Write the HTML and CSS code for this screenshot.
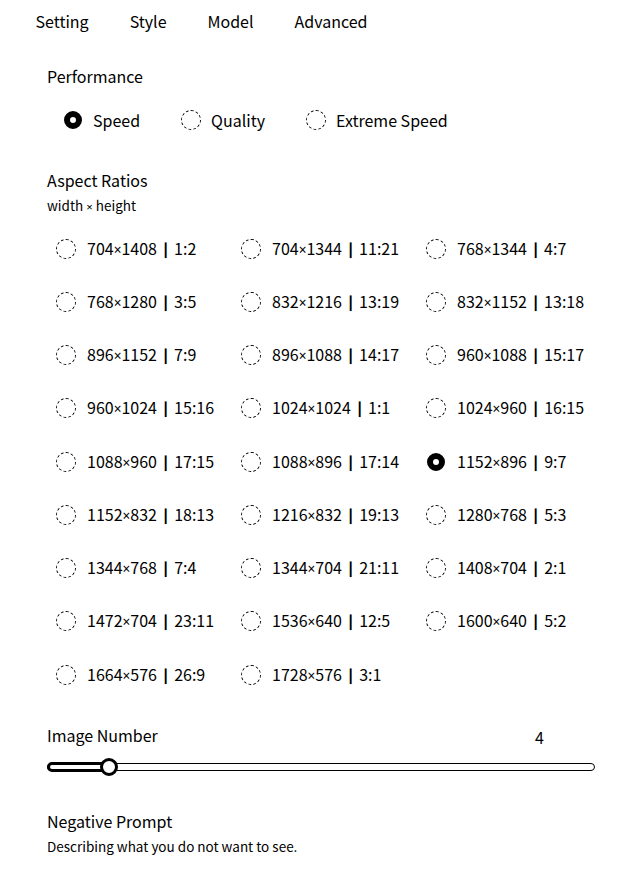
FILE: index.html
```html
<!DOCTYPE html>
<html>
<head>
<meta charset="utf-8">
<link rel="stylesheet" href="styles.css">
</head>
<body>
<nav class="tabs">
  <span class="tab">Setting</span>
  <span class="tab">Style</span>
  <span class="tab">Model</span>
  <span class="tab">Advanced</span>
</nav>
<main class="panel">
  <div class="label perf-label">Performance</div>
  <div class="perf-row">
    <label class="radio"><span class="dot on"></span>Speed</label>
    <label class="radio"><span class="dot"></span>Quality</label>
    <label class="radio"><span class="dot"></span>Extreme Speed</label>
  </div>

  <div class="label aspect-label">Aspect Ratios</div>
  <div class="sub">width <span class="x">×</span> height</div>
  <div class="grid">
    <label class="radio"><span class="dot"></span><span>704<span class="x">×</span>1408 <span class="sep">∣</span> 1:2</span></label>
    <label class="radio"><span class="dot"></span><span>704<span class="x">×</span>1344 <span class="sep">∣</span> 11:21</span></label>
    <label class="radio"><span class="dot"></span><span>768<span class="x">×</span>1344 <span class="sep">∣</span> 4:7</span></label>
    <label class="radio"><span class="dot"></span><span>768<span class="x">×</span>1280 <span class="sep">∣</span> 3:5</span></label>
    <label class="radio"><span class="dot"></span><span>832<span class="x">×</span>1216 <span class="sep">∣</span> 13:19</span></label>
    <label class="radio"><span class="dot"></span><span>832<span class="x">×</span>1152 <span class="sep">∣</span> 13:18</span></label>
    <label class="radio"><span class="dot"></span><span>896<span class="x">×</span>1152 <span class="sep">∣</span> 7:9</span></label>
    <label class="radio"><span class="dot"></span><span>896<span class="x">×</span>1088 <span class="sep">∣</span> 14:17</span></label>
    <label class="radio"><span class="dot"></span><span>960<span class="x">×</span>1088 <span class="sep">∣</span> 15:17</span></label>
    <label class="radio"><span class="dot"></span><span>960<span class="x">×</span>1024 <span class="sep">∣</span> 15:16</span></label>
    <label class="radio"><span class="dot"></span><span>1024<span class="x">×</span>1024 <span class="sep">∣</span> 1:1</span></label>
    <label class="radio"><span class="dot"></span><span>1024<span class="x">×</span>960 <span class="sep">∣</span> 16:15</span></label>
    <label class="radio"><span class="dot"></span><span>1088<span class="x">×</span>960 <span class="sep">∣</span> 17:15</span></label>
    <label class="radio"><span class="dot"></span><span>1088<span class="x">×</span>896 <span class="sep">∣</span> 17:14</span></label>
    <label class="radio"><span class="dot on"></span><span>1152<span class="x">×</span>896 <span class="sep">∣</span> 9:7</span></label>
    <label class="radio"><span class="dot"></span><span>1152<span class="x">×</span>832 <span class="sep">∣</span> 18:13</span></label>
    <label class="radio"><span class="dot"></span><span>1216<span class="x">×</span>832 <span class="sep">∣</span> 19:13</span></label>
    <label class="radio"><span class="dot"></span><span>1280<span class="x">×</span>768 <span class="sep">∣</span> 5:3</span></label>
    <label class="radio"><span class="dot"></span><span>1344<span class="x">×</span>768 <span class="sep">∣</span> 7:4</span></label>
    <label class="radio"><span class="dot"></span><span>1344<span class="x">×</span>704 <span class="sep">∣</span> 21:11</span></label>
    <label class="radio"><span class="dot"></span><span>1408<span class="x">×</span>704 <span class="sep">∣</span> 2:1</span></label>
    <label class="radio"><span class="dot"></span><span>1472<span class="x">×</span>704 <span class="sep">∣</span> 23:11</span></label>
    <label class="radio"><span class="dot"></span><span>1536<span class="x">×</span>640 <span class="sep">∣</span> 12:5</span></label>
    <label class="radio"><span class="dot"></span><span>1600<span class="x">×</span>640 <span class="sep">∣</span> 5:2</span></label>
    <label class="radio"><span class="dot"></span><span>1664<span class="x">×</span>576 <span class="sep">∣</span> 26:9</span></label>
    <label class="radio"><span class="dot"></span><span>1728<span class="x">×</span>576 <span class="sep">∣</span> 3:1</span></label>
  </div>

  <div class="slider-head">
    <span class="label">Image Number</span>
    <span class="num">4</span>
  </div>
  <div class="slider">
    <div class="track"></div>
    <div class="fill"></div>
    <div class="thumb"></div>
  </div>

  <div class="label neg-label">Negative Prompt</div>
  <div class="sub neg-sub">Describing what you do not want to see.</div>
</main>
</body>
</html>
```
FILE: styles.css
```css
* { box-sizing: border-box; }
body {
  margin: 0;
  background: #fff;
  color: #000;
  font-family: "Noto Sans CJK SC", "Noto Sans", sans-serif;
  font-size: 16px;
}
.tabs {
  display: flex;
  align-items: center;
  height: 42px;
  padding-left: 15px;
}
.tab {
  padding: 0 20.5px;
  line-height: 24px;
}
.panel {
  padding-left: 47px;
  width: 596px;
}
.label {
  line-height: 24px;
  font-size: 16px;
}
.perf-label { margin-top: 22px; }
.perf-row {
  display: flex;
  gap: 41px;
  margin-top: 20px;
  padding-left: 16px;
  height: 24px;
  align-items: center;
}
.radio {
  display: flex;
  align-items: center;
  gap: 10px;
  line-height: 24px;
  white-space: nowrap;
}
.dot {
  width: 20px;
  height: 20px;
  border: 1px dashed #000;
  border-radius: 50%;
  flex: none;
}
.dot.on {
  width: 18px;
  height: 18px;
  margin: 0 1px;
  border: 6px solid #000;
  background: #fff;
}
.x {
  font-family: "Noto Sans", sans-serif;
  font-size: 0.85em;
}
.sep {
  font-family: "DejaVu Sans", sans-serif;
  font-weight: bold;
  margin: 0 1px;
}
.aspect-label { margin-top: 36px; }
.sub {
  font-size: 13.5px;
  line-height: 20px;
  margin-top: 3px;
}
.grid {
  display: grid;
  grid-template-columns: 185px 185px 185px;
  grid-auto-rows: 53.25px;
  margin-top: 5px;
  padding-left: 9px;
}
.grid .radio { gap: 11px; }
.slider-head {
  display: flex;
  justify-content: space-between;
  align-items: center;
  margin-top: 19px;
  padding-right: 52px;
}
.num { line-height: 24px; margin-top: 5px; }
.slider {
  position: relative;
  height: 20px;
  margin-top: 8px;
  width: 548px;
}
.track {
  position: absolute;
  left: 0; right: 0; top: 6px;
  height: 8px;
  border: 1px solid #000;
  border-radius: 4px;
}
.fill {
  position: absolute;
  left: 0; top: 5px;
  width: 60px;
  height: 10px;
  border: 3px solid #000;
  border-radius: 5px;
  background: #fff;
}
.thumb {
  position: absolute;
  left: 53px; top: 1px;
  width: 18px;
  height: 18px;
  border: 3px solid #000;
  border-radius: 50%;
  background: #fff;
}
.neg-label { margin-top: 32px; }
.neg-sub { margin-top: 3px; }
```
